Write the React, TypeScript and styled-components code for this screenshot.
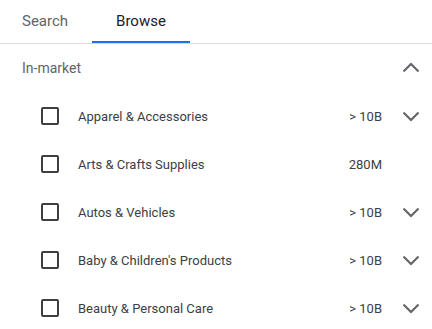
import React, { useState } from "react";
import styled, { createGlobalStyle } from "styled-components";

const GlobalStyle = createGlobalStyle`
  body {
    margin: 0;
    background: #ffffff;
    font-family: Roboto, "Liberation Sans", Arial, sans-serif;
  }
`;

const Panel = styled.div`
  width: 432px;
  height: 329px;
  overflow: hidden;
  background: #ffffff;
`;

const TabBar = styled.div`
  display: flex;
  border-bottom: 1px solid #dadce0;
  margin-left: -2px;
`;

const Tab = styled.button<{ active?: boolean }>`
  height: 43px;
  box-sizing: border-box;
  padding: 0 24px;
  display: flex;
  align-items: center;
  background: none;
  border: none;
  border-bottom: 2px solid ${(p) => (p.active ? "#1a73e8" : "transparent")};
  font-family: inherit;
  font-size: 15px;
  color: ${(p) => (p.active ? "#202124" : "#5f6368")};
  cursor: pointer;
`;

const SectionHeader = styled.div`
  height: 48px;
  display: flex;
  align-items: center;
  justify-content: space-between;
  padding: 0 9px 1px 22px;
  box-sizing: border-box;
  font-size: 14px;
  color: #5f6368;
`;

const Row = styled.div`
  height: 48px;
  display: flex;
  align-items: center;
  padding: 0 9px 0 41px;
`;

const Checkbox = styled.span`
  width: 18px;
  height: 18px;
  box-sizing: border-box;
  border: 2px solid #3c4043;
  border-radius: 2px;
  flex-shrink: 0;
`;

const Label = styled.span`
  flex: 1;
  margin-left: 19px;
  font-size: 13px;
  color: #3c4043;
`;

const Volume = styled.span`
  font-size: 13px;
  color: #3c4043;
  margin-right: 17px;
`;

const IconBox = styled.span`
  width: 24px;
  height: 24px;
  display: flex;
  align-items: center;
  justify-content: center;
  color: #5f6368;
`;

const Chevron = ({ up }: { up?: boolean }) => (
  <svg width="18" height="11" viewBox="0 0 18 11">
    <polyline
      points={up ? "1.5,9.5 9,2 16.5,9.5" : "1.5,1.5 9,9 16.5,1.5"}
      fill="none"
      stroke="currentColor"
      strokeWidth="2"
    />
  </svg>
);

const categories = [
  { name: "Apparel & Accessories", size: "> 10B", more: true },
  { name: "Arts & Crafts Supplies", size: "280M", more: false },
  { name: "Autos & Vehicles", size: "> 10B", more: true },
  { name: "Baby & Children's Products", size: "> 10B", more: true },
  { name: "Beauty & Personal Care", size: "> 10B", more: true },
];

const App = () => {
  const [tab, setTab] = useState("browse");

  return (
    <Panel>
      <GlobalStyle />
      <TabBar>
        <Tab active={tab === "search"} onClick={() => setTab("search")}>
          Search
        </Tab>
        <Tab active={tab === "browse"} onClick={() => setTab("browse")}>
          Browse
        </Tab>
      </TabBar>
      <SectionHeader>
        In-market
        <IconBox>
          <Chevron up />
        </IconBox>
      </SectionHeader>
      {categories.map((c) => (
        <Row key={c.name}>
          <Checkbox />
          <Label>{c.name}</Label>
          <Volume>{c.size}</Volume>
          <IconBox>{c.more && <Chevron />}</IconBox>
        </Row>
      ))}
    </Panel>
  );
};

export default App;
